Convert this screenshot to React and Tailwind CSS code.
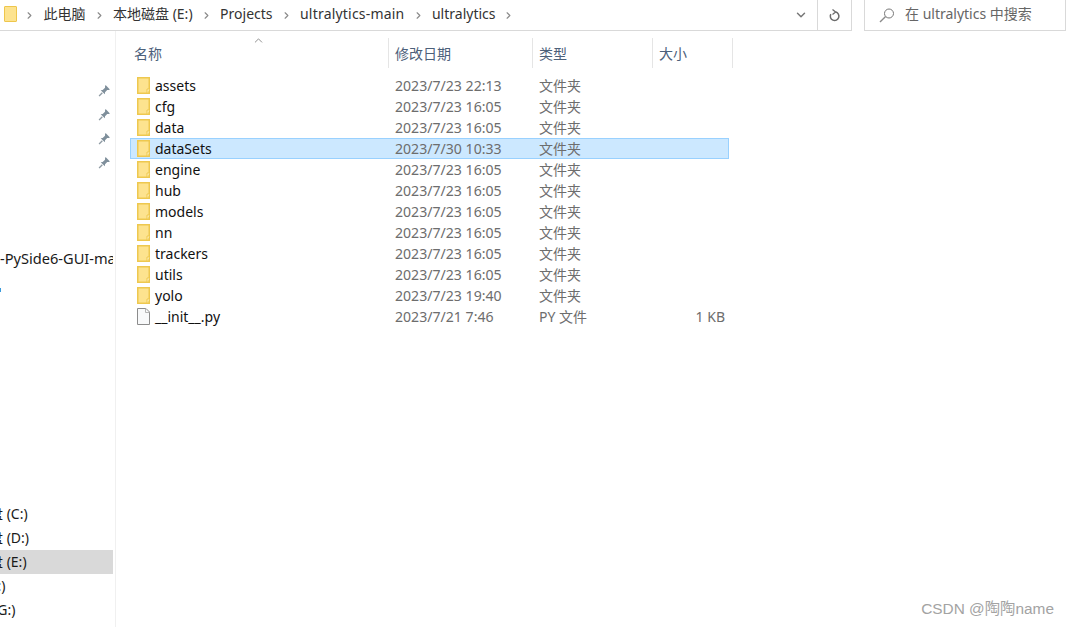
import { ChevronRight, ChevronDown, ChevronUp } from 'lucide-react';

const FONT = 'font-["Noto_Sans","Noto_Sans_CJK_SC",sans-serif]';

const CRUMBS = ['此电脑', '本地磁盘 (E:)', 'Projects', 'ultralytics-main', 'ultralytics'];

const FILES = [
  { name: 'assets', date: '2023/7/23 22:13', type: '文件夹' },
  { name: 'cfg', date: '2023/7/23 16:05', type: '文件夹' },
  { name: 'data', date: '2023/7/23 16:05', type: '文件夹' },
  { name: 'dataSets', date: '2023/7/30 10:33', type: '文件夹', selected: true },
  { name: 'engine', date: '2023/7/23 16:05', type: '文件夹' },
  { name: 'hub', date: '2023/7/23 16:05', type: '文件夹' },
  { name: 'models', date: '2023/7/23 16:05', type: '文件夹' },
  { name: 'nn', date: '2023/7/23 16:05', type: '文件夹' },
  { name: 'trackers', date: '2023/7/23 16:05', type: '文件夹' },
  { name: 'utils', date: '2023/7/23 16:05', type: '文件夹' },
  { name: 'yolo', date: '2023/7/23 19:40', type: '文件夹' },
  { name: '__init__.py', date: '2023/7/21 7:46', type: 'PY 文件', size: '1 KB', file: true },
];

// the nav pane is scrolled sideways, so drive labels start off-screen
const DRIVES = [
  { label: '盘 (C:)', shift: '-ml-[11px]' },
  { label: '盘 (D:)', shift: '-ml-[11px]' },
  { label: '盘 (E:)', shift: '-ml-[11px]', active: true },
  { label: '(F:)', shift: '-ml-[14px]' },
  { label: '(G:)', shift: '-ml-[7px]' },
];

function FolderIcon() {
  return (
    <svg width="13" height="17" viewBox="0 0 13 17" className="shrink-0">
      <rect x="0.75" y="0.75" width="11.5" height="15.5" fill="#fde38f" stroke="#eec84f" strokeWidth="1.5" />
      <path d="M10 16v-4h2.5" fill="#fff3c4" stroke="#eec84f" />
    </svg>
  );
}

function FileIcon() {
  return (
    <svg width="13" height="17" viewBox="0 0 13 17" className="shrink-0">
      <path d="M.5.5h8.5l3.5 3.5v12.5H.5z" fill="#f8f9fa" stroke="#8c8c8c" />
      <path d="M8.5.5v4h4" fill="none" stroke="#b5b5b5" />
    </svg>
  );
}

function PinIcon() {
  return (
    <svg width="13" height="13" viewBox="0 0 12 12" className="shrink-0">
      <path d="M7 1l4 4-1 .5-1.5 0-2 2.2-.2 1.8-3.8-3.8 1.8-.2 2.2-2 0-1.5z" fill="#7f8f9b" />
      <path d="M4 8l-3 3" stroke="#8f9ba4" strokeWidth="1.2" />
    </svg>
  );
}

function SearchGlass() {
  return (
    <svg width="16" height="15" viewBox="0 0 16 15" className="shrink-0" fill="none">
      <circle cx="10" cy="5.5" r="4.5" stroke="#777" />
      <path d="M6.6 8.6L1 14" stroke="#8a8a8a" strokeWidth="1.4" />
    </svg>
  );
}

function RefreshIcon() {
  return (
    <svg width="12" height="13" viewBox="0 0 12 13" fill="none">
      <path d="M6.6 3A4.3 4.3 0 1 1 1.8 5.2" stroke="#6b6b6b" strokeWidth="1.5" />
      <path d="M3.5.5L6.6 3 3.5 5.5" stroke="#6b6b6b" strokeWidth="1.3" />
    </svg>
  );
}

function TopBar() {
  return (
    <div className="flex h-[31px] items-start">
      <div className="flex h-[31px] w-[852px] items-center border-r border-b border-[#d9d9d9]">
        <div className="ml-[4px] -mr-[1px] -mt-[3px] h-[16px] w-[13px] rounded-[1px] border-[1.5px] border-[#eec64c] bg-[#fde38f]" />
        {CRUMBS.map(c => (
          <div key={c} className="flex items-center">
            <ChevronRight size={11} strokeWidth={2.5} className="mx-[8.25px] text-[#8a8a8a]" />
            <span className={`-mt-[2px] text-[14px] leading-[28px] text-[#333] whitespace-nowrap ${c === 'ultralytics-main' ? 'tracking-[0.2px]' : ''}`}>{c}</span>
          </div>
        ))}
        <ChevronRight size={11} strokeWidth={2.5} className="ml-[8px] text-[#8a8a8a]" />
        <div className="flex-1" />
        <ChevronDown size={14} strokeWidth={2.5} className="mr-[9px] text-[#777]" />
        <div className="flex h-full w-[34px] items-center justify-center border-l border-[#d9d9d9]">
          <RefreshIcon />
        </div>
      </div>
      <div className="ml-[12px] flex h-[31px] w-[202px] items-center border-x border-b border-[#d9d9d9] pl-[14px]">
        <SearchGlass />
        <span className="ml-[10px] -mt-[3px] text-[14px] text-[#666] whitespace-nowrap">在 ultralytics 中搜索</span>
      </div>
    </div>
  );
}

function Sidebar() {
  return (
    <div className="flex w-[116px] shrink-0 flex-col overflow-hidden border-r border-[#f0f0f0]">
      <div className="flex h-[140px] flex-col items-end gap-[11px] pt-[53px] pr-[4px]">
        {[0, 1, 2, 3].map(i => <PinIcon key={i} />)}
      </div>
      <div className="mt-[75px] w-[113px] overflow-hidden text-[14.6px] leading-[24px] text-[#1a1a1a] whitespace-nowrap">
        -PySide6-GUI-main
      </div>
      <div className="mt-[18px] h-[4px] w-[1px] bg-[#3a9bdc]" />
      <div className="mt-[210px] flex w-[113px] flex-col">
        {DRIVES.map(d => (
          <div key={d.label} className={`h-[24px] overflow-hidden text-[14px] leading-[24px] text-[#1a1a1a] whitespace-nowrap ${d.active ? 'bg-[#d9d9d9]' : ''}`}>
            <span className={`block ${d.shift}`}>{d.label}</span>
          </div>
        ))}
      </div>
    </div>
  );
}

function HeaderCell({ label, className }) {
  return (
    <div className={`flex h-[30px] items-center border-r border-[#e5e5e5] pl-[6px] pt-[1px] text-[14px] text-[#4c607a] ${className}`}>
      {label}
    </div>
  );
}

function FileRow({ item }) {
  return (
    <div className={`flex h-[21px] w-[599px] items-center border text-[14px] ${item.selected ? 'border-[#99d1ff] bg-[#cce8ff]' : 'border-transparent'}`}>
      <div className="flex w-[258px] items-center gap-[5px] pl-[6px]">
        {item.file ? <FileIcon /> : <FolderIcon />}
        <span className="text-[#111]">{item.name}</span>
      </div>
      <div className="w-[144px] pl-[6px] text-[14.1px] text-[#6d6d6d]">{item.date}</div>
      <div className="w-[120px] pl-[6px] text-[#6d6d6d]">{item.type}</div>
      <div className="w-[72px] text-right text-[#6d6d6d]">{item.size}</div>
    </div>
  );
}

export default function App() {
  return (
    <div className={`relative flex h-[627px] w-[1068px] flex-col overflow-hidden bg-white ${FONT}`}>
      <TopBar />
      <div className="flex flex-1">
        <Sidebar />
        <div className="flex flex-col pt-[7px]">
          <div className="relative flex">
            <ChevronUp size={13} strokeWidth={1.5} className="absolute left-[136px] -top-[4px] text-[#777]" />
            <HeaderCell label="名称" className="ml-[12px] w-[261px]" />
            <HeaderCell label="修改日期" className="w-[144px]" />
            <HeaderCell label="类型" className="w-[120px]" />
            <HeaderCell label="大小" className="w-[80px]" />
          </div>
          <div className="ml-[14px] mt-[7px] flex flex-col">
            {FILES.map(f => <FileRow key={f.name} item={f} />)}
          </div>
        </div>
      </div>
      <div className="absolute right-[14px] bottom-[7px] text-[15.4px] text-[#a3a3a3] font-['Liberation_Sans','Noto_Sans_CJK_SC',sans-serif]">
        CSDN @陶陶name
      </div>
    </div>
  );
}
